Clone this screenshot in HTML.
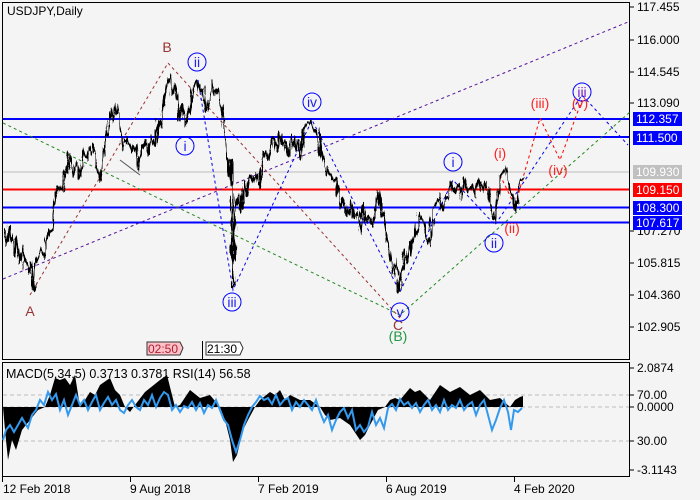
<!DOCTYPE html>
<html><head><meta charset="utf-8"><style>
html,body{margin:0;padding:0;background:#f4f4f4;}
svg{display:block;font-family:"Liberation Sans",sans-serif;}
</style></head><body>
<svg width="700" height="500" viewBox="0 0 700 500" xmlns="http://www.w3.org/2000/svg">
<defs>
<filter id="jit" x="-5%" y="-10%" width="110%" height="120%">
<feTurbulence type="fractalNoise" baseFrequency="0.35 0.05" numOctaves="2" seed="3" result="n"/>
<feDisplacementMap in="SourceGraphic" in2="n" scale="9" xChannelSelector="R" yChannelSelector="G"/>
</filter>
</defs>
<rect width="700" height="500" fill="#f4f4f4"/>
<rect x="2.5" y="2.5" width="627" height="357" fill="#f4f4f4" stroke="#000"/>
<rect x="2.5" y="362.5" width="627" height="114" fill="#f4f4f4" stroke="#000"/>
<line x1="3" y1="172" x2="629" y2="172" stroke="#bbb" stroke-width="1"/>
<line x1="3" y1="119" x2="629" y2="119" stroke="#0000ff" stroke-width="2"/>
<line x1="3" y1="137" x2="629" y2="137" stroke="#0000ff" stroke-width="2"/>
<line x1="3" y1="189.5" x2="629" y2="189.5" stroke="#ff0000" stroke-width="2"/>
<line x1="3" y1="207.5" x2="629" y2="207.5" stroke="#0000ff" stroke-width="2"/>
<line x1="3" y1="222.5" x2="629" y2="222.5" stroke="#0000ff" stroke-width="2"/>
<g fill="none" stroke-width="1" stroke-dasharray="3,3">
<polyline points="3,123 400,315 630,112" stroke="#228822"/>
<polyline points="3,279 628,22" stroke="#551199"/>
<polyline points="30,295 168,63 400,318" stroke="#993333"/>
<polyline points="198,80 233,290 312,120 400,292 453,180 495,225 582,95 628,145" stroke="#0000ee"/>
<polyline points="500,175 515,206 540,118 560,160 582,100" stroke="#ff0000"/>
<polyline points="120,160 140,175" stroke="#555" stroke-dasharray="none"/>
</g>
<g fill="none" stroke="#000" stroke-linejoin="round" filter="url(#jit)">
<polyline stroke-width="2" points="4,230 7,245 10,225 13,255 16,238 20,262 23,245 27,275 30,262 33,290 36,262 40,250 44,258 48,228 52,232 55,198 58,185 62,190 66,170 70,152 73,175 77,162 80,178 84,150 88,160 92,145 96,162 100,182 104,150 107,135 111,108 114,120 117,105 120,130 123,148 127,138 131,152 135,145 138,170 141,150 145,140 148,155 151,135 155,145 158,120 161,128 164,100 167,85 170,72 173,95 176,85 179,120 182,105 185,128 188,115 191,100 194,86 197,80 200,92 203,88 206,110 209,100 212,80 215,95 218,88 221,112 224,120 227,150 229,175 231,160 233,285 235,215 238,195 241,210 244,180 247,195 250,175 253,182 256,172 259,190 262,165 265,150 268,160 271,140 274,138 277,150 280,130 283,145 286,140 289,155 292,135 295,150 298,140 301,160 304,130 307,125 311,120 314,132 317,128 320,145 323,160 326,175 329,168 333,182 337,178 340,210 343,198 347,215 350,200 353,218 357,210 360,232 363,205 366,222 369,215 372,228 375,212 378,190 381,205 384,218 387,240 390,250 393,275 396,260 399,292 402,268 405,250 408,262 411,240 414,242 417,228 420,212 423,222 427,238 430,245 433,210 436,205 440,195 443,210 446,195 449,200 452,182 455,192 458,185 461,200 464,178 468,190 472,185 476,198 479,180 483,192 486,182 489,200 492,210 495,222 498,195 501,175 504,168 507,178 510,190 513,195 515,210 518,200 521,180 524,178"/>
</g>
<g font-size="14" text-anchor="middle">
<text x="167" y="52" fill="#993333">B</text>
<text x="30" y="316" fill="#993333">A</text>
<text x="398" y="330" fill="#993333">C</text>
<text x="398" y="341" fill="#229944">(B)</text>
</g>
<g fill="none" stroke="#0000ff" stroke-width="1">
<circle cx="197" cy="62" r="9"/><circle cx="185" cy="146" r="9"/><circle cx="232" cy="302" r="9"/><circle cx="312" cy="102" r="9"/><circle cx="400" cy="312" r="9"/><circle cx="453" cy="162" r="9"/><circle cx="494" cy="243" r="9"/><circle cx="582" cy="92" r="9"/>
</g>
<g font-size="14" text-anchor="middle" fill="#2222ee">
<text x="197" y="67">ii</text><text x="185" y="151">i</text><text x="232" y="307">iii</text><text x="312" y="107">iv</text><text x="400" y="317">v</text><text x="453" y="167">i</text><text x="494" y="248">ii</text><text x="582" y="97" fill="#7722cc">iii</text>
</g>
<g font-size="14" text-anchor="middle" fill="#ff2222">
<text x="500" y="158">(i)</text><text x="512" y="233">(ii)</text><text x="540" y="108">(iii)</text><text x="558" y="175">(iv)</text><text x="580" y="108">(v)</text>
</g>
<text x="7" y="15" font-size="12">USDJPY,Daily</text>
<path d="M147,342 H180 L183,348 L180,355 H147 Z" fill="#ffc0c8" stroke="#333"/>
<text x="148" y="353" font-size="12" fill="#aa2233">02:50</text>
<line x1="202.5" y1="341" x2="202.5" y2="359" stroke="#000"/>
<path d="M206,342 H240 L243,348 L240,355 H206 Z" fill="#fff" stroke="#333"/>
<text x="207" y="353" font-size="12">21:30</text>
<g font-size="12" fill="#000">
<g stroke="#000"><line x1="630" y1="7" x2="634" y2="7"/><line x1="630" y1="40" x2="634" y2="40"/><line x1="630" y1="72" x2="634" y2="72"/><line x1="630" y1="103" x2="634" y2="103"/><line x1="630" y1="231" x2="634" y2="231"/><line x1="630" y1="263" x2="634" y2="263"/><line x1="630" y1="295" x2="634" y2="295"/><line x1="630" y1="327" x2="634" y2="327"/></g>
<text x="637" y="11">117.455</text><text x="637" y="44">116.000</text><text x="637" y="76">114.545</text><text x="637" y="107">113.090</text><text x="637" y="174">110.180</text><text x="637" y="235">107.270</text><text x="637" y="267">105.815</text><text x="637" y="299">104.360</text><text x="637" y="331">102.905</text>
</g>
<g font-size="12">
<rect x="633" y="112" width="49" height="14" fill="#0000ff"/><text x="636" y="123" fill="#fff">112.357</text>
<rect x="633" y="131" width="49" height="14" fill="#0000ff"/><text x="636" y="142" fill="#fff">111.500</text>
<rect x="633" y="165" width="49" height="14" fill="#c0c0c0"/><text x="636" y="176" fill="#fff">109.930</text>
<rect x="633" y="183" width="49" height="14" fill="#ff0000"/><text x="636" y="194" fill="#fff">109.150</text>
<rect x="633" y="201" width="49" height="14" fill="#0000ff"/><text x="636" y="212" fill="#fff">108.300</text>
<rect x="633" y="216" width="49" height="14" fill="#0000ff"/><text x="636" y="227" fill="#fff">107.617</text>
</g>
<g stroke="#bbb" stroke-dasharray="4,3"><line x1="3" y1="395" x2="629" y2="395"/><line x1="3" y1="407" x2="629" y2="407"/><line x1="3" y1="441" x2="629" y2="441"/></g>
<path d="M3,407 L5,430 8,460 12,440 16,450 22,430 30,420 38,410 45,407 L50,395 55,378 60,380 65,378 70,385 75,375 80,407 85,400 90,392 95,395 100,385 110,378 115,390 120,395 125,407 130,412 135,405 145,392 160,380 167,375 172,395 175,407 180,405 190,390 200,398 210,395 220,407 225,420 230,440 233,462 237,455 243,430 248,420 255,407 260,400 265,396 270,392 275,395 280,390 285,400 290,395 300,400 310,400 320,407 325,415 330,420 340,418 350,425 360,440 365,435 370,425 378,410 385,407 390,400 395,398 400,400 410,388 415,392 420,390 430,400 440,385 450,392 460,387 470,395 480,390 490,400 500,398 510,407 515,400 520,397 523,396 523,407 Z" fill="#000"/>
<polyline fill="none" stroke="#3399ee" stroke-width="2" points="3,440 6,430 10,425 14,432 18,425 22,418 28,428 32,415 36,410 40,400 44,405 48,392 52,400 56,394 60,410 64,400 68,415 72,405 76,395 80,405 84,400 88,410 92,402 96,395 100,410 104,403 108,397 112,405 116,400 120,410 124,413 128,405 132,400 136,407 140,410 144,400 148,405 152,395 156,407 160,398 164,392 168,395 172,410 176,405 180,412 184,406 188,408 192,402 196,410 200,403 204,413 208,405 212,408 216,400 220,410 224,420 228,425 232,440 236,452 240,440 244,425 248,415 252,407 256,402 260,396 264,400 268,398 272,404 276,395 280,405 284,400 288,398 292,410 296,402 300,407 304,400 308,405 312,410 316,400 320,412 324,422 328,415 332,430 336,420 340,412 344,408 348,418 352,410 356,430 360,425 364,432 368,427 372,412 376,425 380,418 384,428 388,408 392,404 396,410 400,399 404,405 408,402 412,408 416,403 420,412 424,405 428,400 432,410 436,405 440,412 444,400 448,410 452,405 456,408 460,400 464,410 468,405 472,402 476,415 480,405 484,400 488,415 492,430 496,420 500,408 504,400 508,412 511,430 514,410 518,412 522,408"/>
<text x="6" y="378" font-size="12.5">MACD(5,34,5) 0.3713 0.3781 RSI(14) 56.58</text>
<g font-size="12">
<g stroke="#000"><line x1="630" y1="368" x2="634" y2="368"/><line x1="630" y1="395" x2="634" y2="395"/><line x1="630" y1="407" x2="634" y2="407"/><line x1="630" y1="441" x2="634" y2="441"/><line x1="630" y1="470" x2="634" y2="470"/></g>
<text x="637" y="372">2.0874</text><text x="637" y="399">70.00</text><text x="637" y="411">0.0000</text><text x="637" y="445">30.00</text><text x="637" y="474">-3.1143</text>
</g>
<g stroke="#000"><line x1="2.5" y1="477" x2="2.5" y2="482"/><line x1="130.5" y1="477" x2="130.5" y2="482"/><line x1="258.5" y1="477" x2="258.5" y2="482"/><line x1="386.5" y1="477" x2="386.5" y2="482"/><line x1="514.5" y1="477" x2="514.5" y2="482"/></g>
<g font-size="12"><text x="3" y="493">12 Feb 2018</text><text x="130" y="493">9 Aug 2018</text><text x="258" y="493">7 Feb 2019</text><text x="386" y="493">6 Aug 2019</text><text x="514" y="493">4 Feb 2020</text></g>
</svg>
</body></html>
